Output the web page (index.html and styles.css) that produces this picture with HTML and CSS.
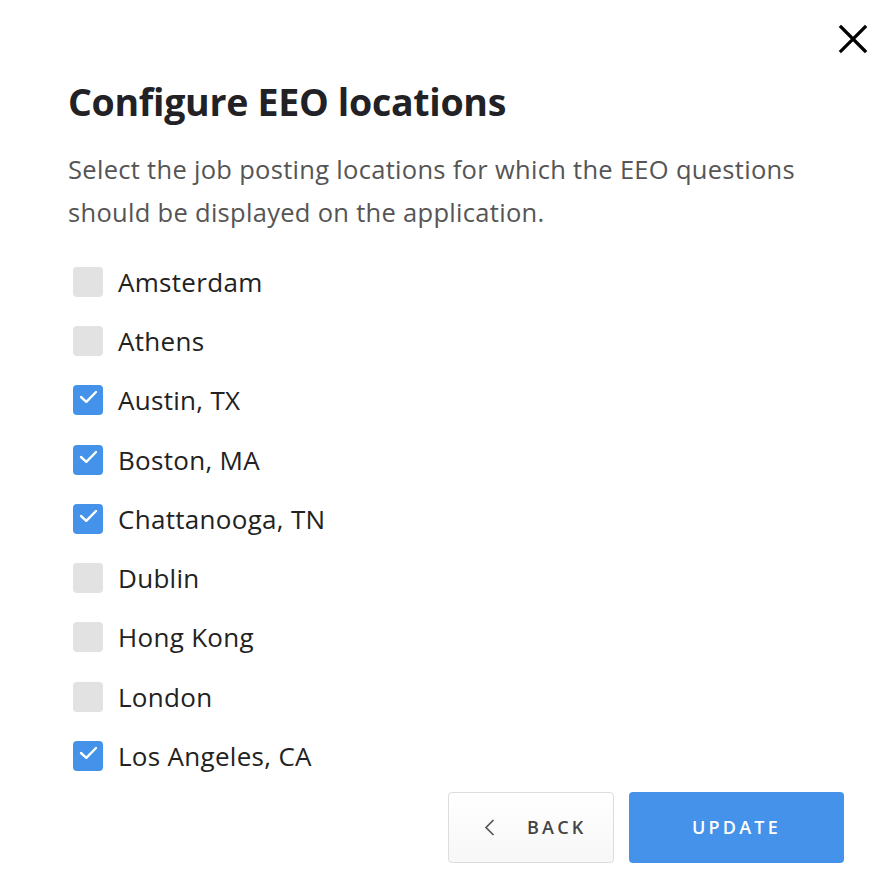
FILE: index.html
```html
<!DOCTYPE html>
<html lang="en">
<head>
    <meta charset="UTF-8">
    <title>Configure EEO locations</title>
    <link rel="stylesheet" href="styles.css">
</head>
<body>
    <div class="modal">
        <div class="modal-top">
            <button class="close-btn" aria-label="Close">
                <svg width="30" height="30" viewBox="0 0 30 30"><path d="M3 3 L27 27 M27 3 L3 27" stroke="#000" stroke-width="3.2" stroke-linecap="square" fill="none"/></svg>
            </button>
        </div>
        <h1 class="modal-title">Configure EEO locations</h1>
        <p class="modal-desc">Select the job posting locations for which the EEO questions should be displayed on the application.</p>

        <ul class="location-list">
            <li class="location"><span class="box"></span>Amsterdam</li>
            <li class="location"><span class="box"></span>Athens</li>
            <li class="location"><span class="box checked"><svg viewBox="0 0 30 30"><path d="M8 12 L13.3 16.8 L23 7" stroke="#fff" stroke-width="2.4" fill="none" stroke-linecap="round" stroke-linejoin="round"/></svg></span>Austin, TX</li>
            <li class="location"><span class="box checked"><svg viewBox="0 0 30 30"><path d="M8 12 L13.3 16.8 L23 7" stroke="#fff" stroke-width="2.4" fill="none" stroke-linecap="round" stroke-linejoin="round"/></svg></span>Boston, MA</li>
            <li class="location"><span class="box checked"><svg viewBox="0 0 30 30"><path d="M8 12 L13.3 16.8 L23 7" stroke="#fff" stroke-width="2.4" fill="none" stroke-linecap="round" stroke-linejoin="round"/></svg></span>Chattanooga, TN</li>
            <li class="location"><span class="box"></span>Dublin</li>
            <li class="location"><span class="box"></span>Hong Kong</li>
            <li class="location"><span class="box"></span>London</li>
            <li class="location"><span class="box checked"><svg viewBox="0 0 30 30"><path d="M8 12 L13.3 16.8 L23 7" stroke="#fff" stroke-width="2.4" fill="none" stroke-linecap="round" stroke-linejoin="round"/></svg></span>Los Angeles, CA</li>
        </ul>

        <div class="modal-actions">
            <button class="btn btn-back">
                <svg width="11" height="17" viewBox="0 0 11 17"><path d="M9.5 1 L2 8.5 L9.5 16" stroke="#555" stroke-width="1.7" fill="none"/></svg>
                <span>BACK</span>
            </button>
            <button class="btn btn-update">UPDATE</button>
        </div>
    </div>
</body>
</html>
```

FILE: styles.css
```css
body {
    margin: 0;
    background: #fff;
    font-family: 'Open Sans', 'Noto Sans', sans-serif;
    color: #222;
}
.modal {
    width: 890px;
    height: 890px;
    box-sizing: border-box;
    padding: 24px 46px 0 68px;
}
.modal-top {
    display: flex;
    justify-content: flex-end;
    margin-right: -24px;
}
.close-btn {
    border: none;
    background: none;
    padding: 0;
    width: 30px;
    height: 30px;
    cursor: pointer;
}
.modal-title {
    margin: 26px 0 0;
    font-size: 37.5px;
    font-weight: 700;
    line-height: 44px;
    color: #222226;
    letter-spacing: -0.3px;
}
.modal-desc {
    margin: 24px 0 0;
    font-size: 25.5px;
    line-height: 43px;
    color: #555;
    letter-spacing: 0.3px;
    width: 760px;
}
.location-list {
    list-style: none;
    margin: 18px 0 0;
    padding: 0;
}
.location {
    display: flex;
    align-items: center;
    height: 59.3px;
    font-size: 26px;
    letter-spacing: 0.3px;
    color: #222;
}
.box {
    width: 30px;
    height: 30px;
    border-radius: 4px;
    background: #e2e2e2;
    margin: 0 15px 0 5px;
    flex: none;
    display: flex;
}
.box.checked {
    background: #4492e9;
}
.box svg {
    width: 30px;
    height: 30px;
}
.modal-actions {
    display: flex;
    justify-content: flex-end;
    gap: 15px;
    margin-top: 6px;
}
.btn {
    height: 71px;
    border-radius: 4px;
    font-family: inherit;
    font-size: 18px;
    font-weight: 600;
    letter-spacing: 3.2px;
    cursor: pointer;
}
.btn-back {
    width: 166px;
    border: 1px solid #ddd;
    background: linear-gradient(#fff, #f7f7f7);
    color: #444;
    display: flex;
    align-items: center;
    gap: 32px;
    padding: 0 0 0 35px;
}
.btn-update {
    width: 215px;
    border: none;
    background: #4492e9;
    color: #fff;
}
```
